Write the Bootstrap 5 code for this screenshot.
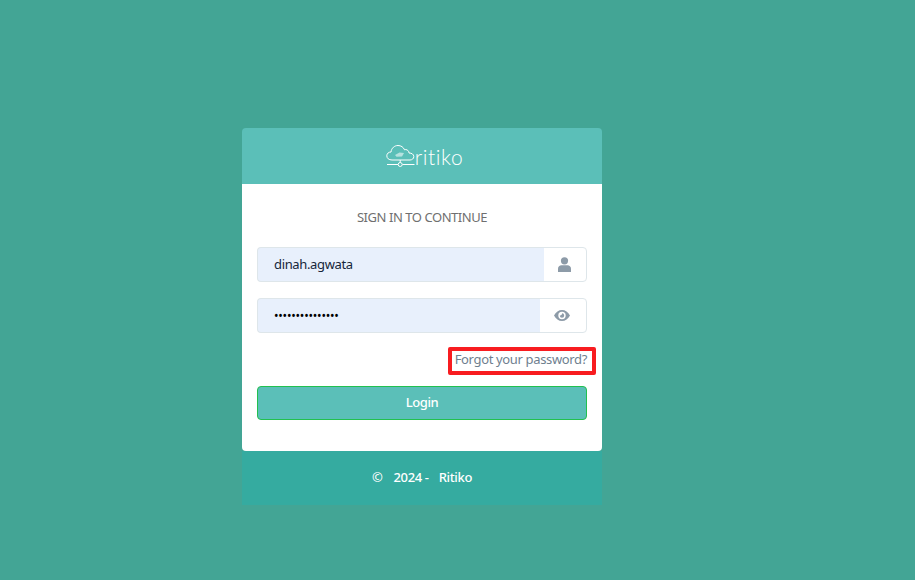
<!DOCTYPE html>
<html lang="en">
<head>
  <meta charset="UTF-8">
  <meta name="viewport" content="width=device-width, initial-scale=1.0">
  <title>Login - Ritiko</title>
  <link href="https://cdn.jsdelivr.net/npm/bootstrap@5.3.0/dist/css/bootstrap.min.css" rel="stylesheet">
  <style>
    body {
      background: #43a595;
      font-family: "Noto Sans", sans-serif;
      font-size: 13px;
      letter-spacing: -.35px;
      color: #6c757d;
      min-height: 100vh;
      padding: 128px 71px 0 0;
    }

    .login-box {
      width: 360px;
    }

    .login-head {
      height: 56px;
      background: #5bbfb8;
      border-radius: 4px 4px 0 0;
      padding-left: 5px;
    }

    .login-brand {
      font-family: "Lato", sans-serif;
      font-weight: 300;
      font-size: 21px;
      line-height: 1;
      color: #fff;
      letter-spacing: .6px;
      padding-top: 1px;
    }

    .login-body {
      height: 267px;
      background: #fff;
      border-radius: 0 0 4px 4px;
      padding: 25px 15px 0;
    }

    .login-title {
      line-height: 17px;
      letter-spacing: -.45px;
      color: #6f6f6f;
      margin-bottom: 21px;
    }

    .login-group {
      height: 35px;
      margin-bottom: 16px;
    }

    .login-group .form-control {
      background: #e8f0fc;
      border-color: #dee6ea;
      border-right: 0;
      border-radius: 4px 0 0 4px;
      padding: 1px 16px 0;
      font-size: 13px;
      letter-spacing: -.35px;
      color: #16263a;
    }

    .login-group input[type="password"] {
      color: #000;
      font-size: 12px;
      letter-spacing: -.2px;
    }

    .login-group .input-group-text {
      background: #fff;
      border-color: #dee6ea;
      border-radius: 0 4px 4px 0;
      padding: 0 2px 0 0;
      justify-content: center;
    }

    .addon-user { width: 44px; }
    .addon-eye { width: 48px; }

    .forgot-row {
      margin-top: -2px;
      margin-bottom: 11px;
    }

    .forgot-link {
      border: 4px solid #f81c20;
      border-radius: 2px;
      padding: 0 5px 0 3px;
      height: 28px;
      margin-right: -9px;
      line-height: 17px;
      color: #6f7f8f;
      text-decoration: none;
    }

    .login-btn {
      height: 34px;
      padding: 0;
      font-size: 13px;
      font-weight: 500;
      letter-spacing: -.45px;
      color: #fff;
      background: #5bbfb8;
      border: 1px solid #22c04f;
      border-radius: 4px;
    }

    .login-foot {
      height: 54px;
      background: #35aba0;
      font-weight: 500;
      color: #fff;
    }

    .foot-year { margin-left: 11px; }
    .foot-name { margin-left: 10px; }
  </style>
</head>

<body class="d-flex justify-content-center align-items-start">
  <div class="login-box">
    <div class="login-head d-flex align-items-center justify-content-center">
      <svg width="29" height="24" viewBox="0 0 29 24" fill="none" stroke="#fff" stroke-width="1" aria-hidden="true">
        <path d="M6 16 C2.800 16 .8 14.200 .8 11.800 C.8 9.500 2.700 8 5 8 C5.500 4 8.500 1.500 12 1.500 C15 1.500 17.500 3.200 18.500 5.800 C19.300 5.400 20.300 5.500 21 5.900 C22.300 6.500 23 7.700 23 9 C25.800 9 27.800 10.300 27.800 12.600 C27.800 14.700 26 16 24 16 Z"/>
        <path d="M9 11 L13.500 8.500 L18 9 L16 12.500 L10.500 12.800 Z" fill="#fff" fill-opacity=".55" stroke="none"/>
        <path d="M1 20.500 H12 M16.500 20.500 H28.500 M14.200 16 V18.500"/>
        <circle cx="14.200" cy="20.500" r="2"/>
      </svg>
      <span class="login-brand">ritiko</span>
    </div>

    <div class="login-body">
      <p class="login-title text-center">SIGN IN TO CONTINUE</p>
      <form onsubmit="return false">
        <div class="input-group login-group">
          <input type="text" class="form-control" value="dinah.agwata" aria-label="Username">
          <span class="input-group-text addon-user">
            <svg width="13" height="15" viewBox="0 0 13 15" fill="#8d9ba8" aria-hidden="true">
              <circle cx="6.500" cy="3.800" r="3.600"/>
              <path d="M0 15 V11.800 C0 9.800 1.600 8.300 3.500 8.300 H9.500 C11.400 8.300 13 9.800 13 11.800 V15 Z"/>
            </svg>
          </span>
        </div>
        <div class="input-group login-group">
          <input type="password" class="form-control" value="password1234567" aria-label="Password">
          <span class="input-group-text addon-eye">
            <svg width="16" height="11" viewBox="0 0 16 11" aria-hidden="true">
              <path fill="#8d9ba8" fill-rule="evenodd" d="M0 5.500 C1.800 2 4.700 0 8 0 C11.300 0 14.200 2 16 5.500 C14.200 9 11.300 11 8 11 C4.700 11 1.800 9 0 5.500 Z M8 1.800 A3.700 3.700 0 1 0 8 9.200 A3.700 3.700 0 1 0 8 1.800 Z"/>
              <path fill="#8d9ba8" d="M8 3.300 A2.200 2.200 0 1 1 5.800 5.500 C6.800 5.800 8.300 4.800 8 3.300 Z"/>
            </svg>
          </span>
        </div>
        <div class="forgot-row d-flex justify-content-end">
          <a href="#" class="forgot-link">Forgot your password?</a>
        </div>
        <button type="submit" class="btn login-btn w-100">Login</button>
      </form>
    </div>

    <div class="login-foot d-flex align-items-center justify-content-center">
      <span>©</span><span class="foot-year">2024 -</span><span class="foot-name">Ritiko</span>
    </div>
  </div>

  <script src="https://cdn.jsdelivr.net/npm/bootstrap@5.3.0/dist/js/bootstrap.bundle.min.js"></script>
</body>
</html>
